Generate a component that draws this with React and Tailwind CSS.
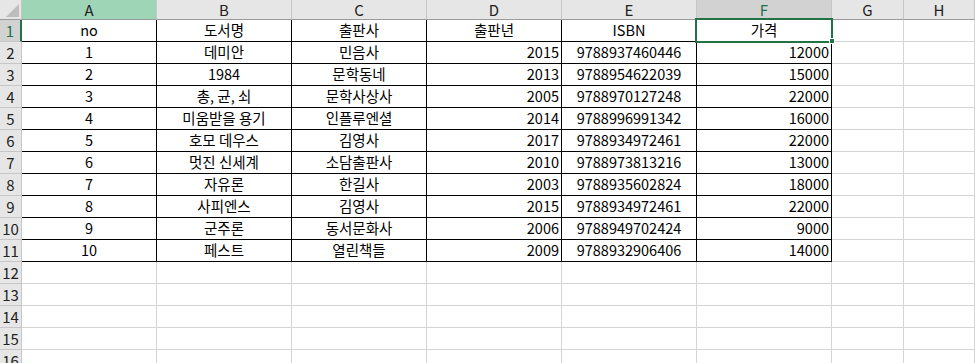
import React from 'react';

const cols = ['A', 'B', 'C', 'D', 'E', 'F', 'G', 'H'];

const books = [
  ['no', '도서명', '출판사', '출판년', 'ISBN', '가격'],
  ['1', '데미안', '민음사', '2015', '9788937460446', '12000'],
  ['2', '1984', '문학동네', '2013', '9788954622039', '15000'],
  ['3', '총, 균, 쇠', '문학사상사', '2005', '9788970127248', '22000'],
  ['4', '미움받을 용기', '인플루엔셜', '2014', '9788996991342', '16000'],
  ['5', '호모 데우스', '김영사', '2017', '9788934972461', '22000'],
  ['6', '멋진 신세계', '소담출판사', '2010', '9788973813216', '13000'],
  ['7', '자유론', '한길사', '2003', '9788935602824', '18000'],
  ['8', '사피엔스', '김영사', '2015', '9788934972461', '22000'],
  ['9', '군주론', '동서문화사', '2006', '9788949702424', '9000'],
  ['10', '페스트', '열린책들', '2009', '9788932906406', '14000'],
];

const rowNums = Array.from({ length: 16 }, (_, i) => i + 1);

const App = () => {
  return (
    <div
      className="relative h-[363px] w-[975px] overflow-hidden bg-white text-black"
      style={{ fontFamily: '"Noto Sans CJK KR", "Noto Sans", sans-serif' }}
    >
      <div className="grid grid-cols-[22px_135px_135px_135px_135px_135px_135px_72px_1fr]">
        {/* column headers */}
        <div className="flex h-[20px] items-end justify-end border-r border-b border-r-[#c6c6c6] border-b-[#9b9b9b] bg-[#e6e6e6] p-[2px]">
          <svg width="13" height="13" viewBox="0 0 13 13">
            <polygon points="13,0 13,13 0,13" fill="#bdbdbd" />
          </svg>
        </div>
        {cols.map((c) => {
          const isA = c === 'A';
          const isF = c === 'F';
          return (
            <div
              key={c}
              className={
                isA
                  ? 'flex h-[20px] items-center justify-center border-r border-b border-r-[#c6c6c6] border-b-[#9b9b9b] bg-[#9fd5b7] text-[15px] leading-none text-[#222]'
                  : isF
                  ? 'flex h-[20px] items-center justify-center border-r border-b border-r-[#c6c6c6] border-b-[#9b9b9b] bg-[#d2d2d2] text-[15px] leading-none text-[#217346]'
                  : 'flex h-[20px] items-center justify-center border-r border-b border-r-[#c6c6c6] border-b-[#9b9b9b] bg-[#e6e6e6] text-[15px] leading-none text-[#222]'
              }
            >
              {c}
            </div>
          );
        })}

        {/* rows */}
        {rowNums.map((r) => {
          const data = books[r - 1];
          return (
            <React.Fragment key={r}>
              <div
                className={
                  r === 1
                    ? 'flex h-[22px] items-center justify-center border-r-2 border-b border-r-[#217346] border-b-[#c6c6c6] bg-[#d2d2d2] text-[15px] leading-none text-[#217346]'
                    : 'flex h-[22px] items-center justify-center border-r border-b border-[#c6c6c6] bg-[#e6e6e6] text-[15px] leading-none text-[#222]'
                }
              >
                {r}
              </div>
              {cols.map((c, ci) => {
                const inTable = data && ci < 6;
                const right = r > 1 && (ci === 3 || ci === 5);
                return (
                  <div
                    key={c}
                    className={
                      inTable
                        ? right
                          ? 'flex h-[22px] items-center justify-end border-r border-b border-black pr-[2px] text-[14.5px] leading-none whitespace-nowrap'
                          : 'flex h-[22px] items-center justify-center border-r border-b border-black text-[14.5px] leading-none whitespace-nowrap'
                        : 'h-[22px] border-r border-b border-[#d4d4d4]'
                    }
                  >
                    {inTable ? data[ci] : null}
                  </div>
                );
              })}
            </React.Fragment>
          );
        })}
      </div>

      {/* active cell F1 */}
      <div className="pointer-events-none absolute left-[695px] top-[18px] h-[25px] w-[138px] border-2 border-[#217346]" />
      <div className="pointer-events-none absolute left-[829px] top-[38px] h-[6px] w-[6px] border border-white bg-[#217346]" />
    </div>
  );
};

export default App;
